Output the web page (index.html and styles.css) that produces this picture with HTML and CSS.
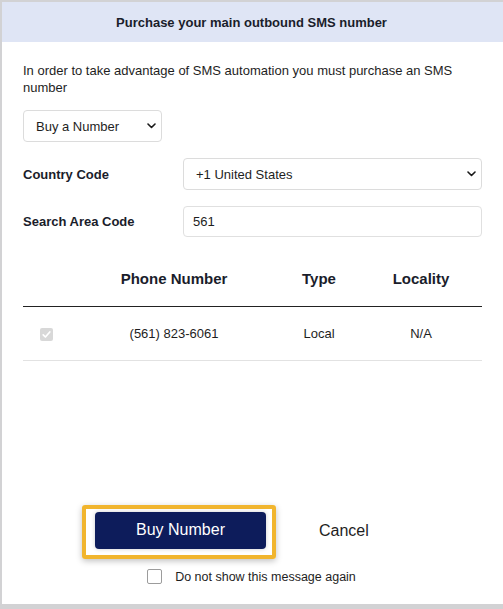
FILE: index.html
```html
<!DOCTYPE html>
<html lang="en">
<head>
<meta charset="utf-8">
<title>Purchase SMS number</title>
<link rel="stylesheet" href="styles.css">
</head>
<body>
<div class="dialog">
  <div class="dialog-header">Purchase your main outbound SMS number</div>
  <div class="dialog-body">
    <p class="intro">In order to take advantage of SMS automation you must purchase an SMS number</p>
    <div class="select-wrap select-small">
      <select class="select"><option>Buy a Number</option></select>
      <svg class="chevron" width="9" height="6" viewBox="0 0 9 6"><path d="M1 1 L4.5 4.5 L8 1" fill="none" stroke="#1a1a1a" stroke-width="1.6" stroke-linecap="round" stroke-linejoin="round"/></svg>
    </div>
    <div class="form-grid">
      <label class="form-label">Country Code</label>
      <div class="select-wrap">
        <select class="select"><option>+1 United States</option></select>
        <svg class="chevron" width="9" height="6" viewBox="0 0 9 6"><path d="M1 1 L4.5 4.5 L8 1" fill="none" stroke="#1a1a1a" stroke-width="1.6" stroke-linecap="round" stroke-linejoin="round"/></svg>
      </div>
      <label class="form-label">Search Area Code</label>
      <input class="text-input" type="text" value="561">
    </div>
    <table class="numbers">
      <thead>
        <tr><th class="col-check"></th><th class="col-phone">Phone Number</th><th class="col-type">Type</th><th class="col-loc">Locality</th></tr>
      </thead>
      <tbody>
        <tr>
          <td class="col-check"><span class="fake-check"><svg width="13" height="13" viewBox="0 0 13 13"><path d="M3.2 6.8 L5.4 9 L9.8 4" fill="none" stroke="#fff" stroke-width="1.7" stroke-linecap="round" stroke-linejoin="round"/></svg></span></td>
          <td>(561) 823-6061</td>
          <td>Local</td>
          <td>N/A</td>
        </tr>
      </tbody>
    </table>
  </div>
  <div class="dialog-footer">
    <div class="actions">
      <div class="focus-ring"><button class="btn-primary" type="button">Buy Number</button></div>
      <button class="btn-link" type="button">Cancel</button>
    </div>
    <label class="dont-show"><input class="box" type="checkbox"><span>Do not show this message again</span></label>
  </div>
</div>
</body>
</html>
```

FILE: styles.css
```css
* { box-sizing: border-box; }
html, body { margin: 0; padding: 0; }
body {
  background: #d2d2d4;
  font-family: "Liberation Sans", Arial, sans-serif;
  color: #1e1e1e;
  width: 503px;
  height: 609px;
  overflow: hidden;
}
.dialog {
  margin: 2px 0 0 2px;
  width: 501px;
  height: 602px;
  background: #fff;
  display: flex;
  flex-direction: column;
}
.dialog-header {
  height: 40px;
  background: #dfe5f5;
  display: flex;
  align-items: center;
  justify-content: center;
  font-weight: bold;
  font-size: 13px;
  color: #1a1d2b;
  padding-right: 2px;
}
.dialog-body {
  padding: 0 21px 0 21px;
}
.intro {
  margin: 20px 0 0;
  font-size: 13px;
  line-height: 17px;
}
.select-wrap {
  position: relative;
  height: 32px;
}
.select-small {
  width: 139px;
  margin-top: 14px;
}
.select {
  appearance: none;
  -webkit-appearance: none;
  width: 100%;
  height: 100%;
  border: 1px solid #dcdcdc;
  border-radius: 4px;
  background: #fff;
  font-family: "Liberation Sans", Arial, sans-serif;
  font-size: 13px;
  color: #1e1e1e;
  padding: 0 0 0 12px;
  margin: 0;
}
.chevron {
  position: absolute;
  right: 6px;
  top: 13px;
}
.form-grid {
  display: grid;
  grid-template-columns: 160px 1fr;
  row-gap: 16px;
  align-items: center;
  margin-top: 16px;
}
.form-label {
  font-weight: bold;
  font-size: 13px;
  color: #1a1d2b;
}
.text-input {
  height: 31px;
  border: 1px solid #e0e0e0;
  border-radius: 4px;
  font-family: "Liberation Sans", Arial, sans-serif;
  font-size: 13px;
  color: #1e1e1e;
  padding: 0 0 0 9px;
  margin: 0;
  width: 100%;
}
.numbers {
  width: 100%;
  border-collapse: collapse;
  margin-top: 17px;
  table-layout: fixed;
}
.numbers th {
  height: 52px;
  font-size: 15px;
  font-weight: bold;
  color: #1a1d2b;
  text-align: center;
  border-bottom: 1px solid #222;
  padding: 0 0 3px;
}
.numbers td {
  height: 54px;
  font-size: 13px;
  text-align: center;
  border-bottom: 1px solid #e2e2e2;
  padding: 0;
}
.col-check { width: 47px; }
.col-phone { width: 208px; }
.col-type { width: 82px; }
.fake-check {
  display: inline-flex;
  width: 13px;
  height: 13px;
  border-radius: 2px;
  background: #d8d8d8;
  vertical-align: middle;
}
.dialog-footer {
  margin-top: auto;
  padding-bottom: 20px;
  display: flex;
  flex-direction: column;
}
.actions {
  display: flex;
  align-items: center;
  padding-left: 80px;
}
.focus-ring {
  width: 194px;
  height: 54px;
  border: 4px solid #f1b52e;
  border-radius: 3px;
  padding: 3px 6px 5px 9px;
  box-shadow: 0 2px 6px rgba(0, 0, 0, 0.25);
}
.btn-primary {
  width: 171px;
  height: 37px;
  border: 0;
  border-radius: 4px;
  background: #0d1c5b;
  color: #fff;
  font-family: "Liberation Sans", Arial, sans-serif;
  font-size: 16px;
  padding: 0 0 1px;
  box-shadow: 0 0 4px rgba(0, 0, 0, 0.2);
}
.btn-link {
  margin-left: 43px;
  background: none;
  border: 0;
  padding: 0 0 2px;
  font-family: "Liberation Sans", Arial, sans-serif;
  font-size: 16px;
  color: #1e1e1e;
}
.dont-show {
  margin-top: 10px;
  display: flex;
  align-items: center;
  justify-content: center;
  gap: 13px;
  font-size: 12.5px;
  color: #1e1e1e;
  padding-right: 2px;
}
.box {
  appearance: none;
  -webkit-appearance: none;
  width: 15px;
  height: 15px;
  margin: 0;
  border: 1px solid #9c9c9c;
  border-radius: 2px;
  background: #fff;
}
```
